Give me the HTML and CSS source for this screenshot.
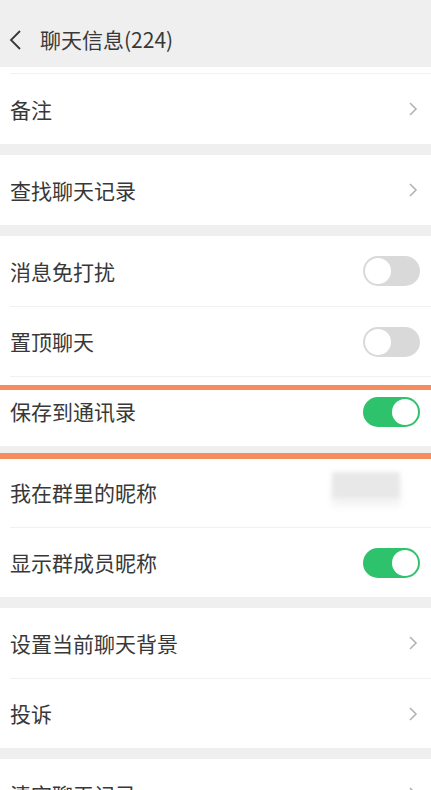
FILE: index.html
```html
<!DOCTYPE html>
<html lang="zh-CN">
<head>
<meta charset="utf-8">
<title>聊天信息</title>
<link rel="stylesheet" href="styles.css">
</head>
<body>
<div class="page">
  <div class="header">
    <svg class="back" width="14" height="22" viewBox="0 0 14 22"><polyline points="12,2 3,11 12,20" fill="none" stroke="#383838" stroke-width="1.8"/></svg>
    <span class="title">聊天信息(224)</span>
  </div>

  <div class="group">
    <div class="stub"></div>
    <div class="row"><span class="label">备注</span><svg class="chev" width="10" height="14" viewBox="0 0 10 14"><polyline points="2,1 8,7 2,13" fill="none" stroke="#b3b3b3" stroke-width="1.6"/></svg></div>
  </div>

  <div class="group">
    <div class="row"><span class="label">查找聊天记录</span><svg class="chev" width="10" height="14" viewBox="0 0 10 14"><polyline points="2,1 8,7 2,13" fill="none" stroke="#b3b3b3" stroke-width="1.6"/></svg></div>
  </div>

  <div class="group">
    <div class="row"><span class="label">消息免打扰</span><span class="toggle"><span class="knob"></span></span></div>
    <div class="row"><span class="label">置顶聊天</span><span class="toggle"><span class="knob"></span></span></div>
    <div class="row"><span class="label">保存到通讯录</span><span class="toggle on"><span class="knob"></span></span></div>
  </div>

  <div class="group">
    <div class="row"><span class="label">我在群里的昵称</span><span class="blur"></span></div>
    <div class="row"><span class="label">显示群成员昵称</span><span class="toggle on"><span class="knob"></span></span></div>
  </div>

  <div class="group">
    <div class="row"><span class="label">设置当前聊天背景</span><svg class="chev" width="10" height="14" viewBox="0 0 10 14"><polyline points="2,1 8,7 2,13" fill="none" stroke="#b3b3b3" stroke-width="1.6"/></svg></div>
    <div class="row"><span class="label">投诉</span><svg class="chev" width="10" height="14" viewBox="0 0 10 14"><polyline points="2,1 8,7 2,13" fill="none" stroke="#b3b3b3" stroke-width="1.6"/></svg></div>
  </div>

  <div class="group">
    <div class="row"><span class="label">清空聊天记录</span><svg class="chev" width="10" height="14" viewBox="0 0 10 14"><polyline points="2,1 8,7 2,13" fill="none" stroke="#b3b3b3" stroke-width="1.6"/></svg></div>
  </div>

  <div class="mark mark-top"></div>
  <div class="mark mark-bottom"></div>
</div>
</body>
</html>
```

FILE: styles.css
```css
html, body {
  margin: 0;
  padding: 0;
  background: #efefef;
}
body {
  font-family: "Noto Sans CJK SC", "Noto Sans", Roboto, sans-serif;
  color: #383838;
  height: 790px;
  overflow: hidden;
}
.page {
  position: relative;
  display: flex;
  flex-direction: column;
  gap: 11px;
}
.header {
  height: 67px;
  box-sizing: border-box;
  padding-top: 12px;
  display: flex;
  align-items: center;
  padding-left: 8px;
  margin-bottom: -11px;
  background: #efefef;
}
.back {
  margin-right: 18px;
}
.title {
  font-size: 21px;
  line-height: 1;
}
.group {
  background: #fff;
  padding-left: 10px;
}
.stub {
  height: 6px;
  border-bottom: 1px solid #f1f1f1;
}
.row {
  height: 70px;
  display: flex;
  align-items: center;
  justify-content: space-between;
  padding-right: 11px;
}
.row + .row {
  border-top: 1px solid #f1f1f1;
  height: 69px;
}
.label {
  font-size: 21px;
  line-height: 1;
}
.chev {
  margin-right: 2px;
}
.toggle {
  width: 57px;
  height: 30px;
  border-radius: 15px;
  background: #d9d9d9;
  display: flex;
  align-items: center;
  padding: 0 2px;
  box-sizing: border-box;
}
.toggle .knob {
  width: 26px;
  height: 26px;
  border-radius: 50%;
  background: #fff;
}
.toggle.on {
  background: #2ec26c;
  justify-content: flex-end;
}
.blur {
  width: 68px;
  height: 26px;
  background: #e8e8e8;
  margin-right: 20px;
  margin-top: -14px;
  filter: blur(2px);
  box-shadow: 0 8px 6px rgba(235,235,235,0.6);
}
.mark {
  position: absolute;
  left: 0;
  right: 0;
  height: 5px;
  background: #f58d5e;
}
.mark-top { top: 385px; }
.mark-bottom { top: 453px; height: 6px; }
```
